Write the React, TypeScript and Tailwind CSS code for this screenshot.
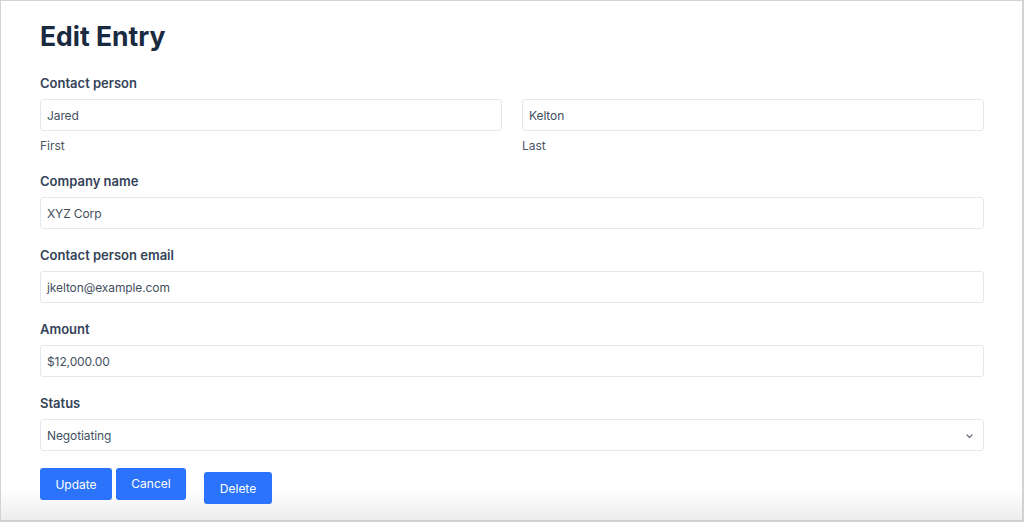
import React from "react";

function Label({ children }: { children: React.ReactNode }) {
  return <div className="text-[13px] leading-[20px] font-semibold text-[#354358]">{children}</div>;
}

function Input({ value }: { value: string }) {
  return (
    <div className="h-[32px] w-full rounded-[3px] border border-[#e3e8ef] bg-white px-[6px] pt-[2px] flex items-center text-[12px] tracking-[-0.1px] text-[#434f60]">
      {value}
    </div>
  );
}

export default function App() {
  return (
    <div
      className="h-[522px] w-[1024px] border-l border-t border-r-2 border-b-2 border-[#d2d2d2] bg-[linear-gradient(to_bottom,#ffffff_calc(100%-30px),#ececec)] overflow-hidden"
      style={{ fontFamily: "Inter, 'Noto Sans', sans-serif" }}
    >
      <div className="pl-[39px] pr-[38px]">
        <h1 className="mt-[19px] text-[26.5px] leading-[33px] font-bold text-[#1a2a40]">Edit Entry</h1>

        <div className="mt-[20px]">
          <Label>Contact person</Label>
          <div className="mt-[6px] grid grid-cols-2 gap-x-[20px]">
            <div>
              <Input value="Jared" />
              <div className="mt-[7px] text-[12px] leading-[16px] text-[#4b5565]">First</div>
            </div>
            <div>
              <Input value="Kelton" />
              <div className="mt-[7px] text-[12px] leading-[16px] text-[#4b5565]">Last</div>
            </div>
          </div>
        </div>

        <div className="mt-[17px]">
          <Label>Company name</Label>
          <div className="mt-[6px]">
            <Input value="XYZ Corp" />
          </div>
        </div>

        <div className="mt-[16px]">
          <Label>Contact person email</Label>
          <div className="mt-[6px]">
            <Input value="jkelton@example.com" />
          </div>
        </div>

        <div className="mt-[16px]">
          <Label>Amount</Label>
          <div className="mt-[6px]">
            <Input value="$12,000.00" />
          </div>
        </div>

        <div className="mt-[16px]">
          <Label>Status</Label>
          <div className="mt-[6px] h-[32px] w-full rounded-[3px] border border-[#e3e8ef] bg-white pl-[6px] pr-[10px] pt-[2px] flex items-center justify-between text-[12px] tracking-[-0.1px] text-[#434f60]">
            <span>Negotiating</span>
            <svg width="7" height="5" viewBox="0 0 7 5" fill="none">
              <path d="M1 1l2.5 2.5L6 1" stroke="#6b7280" strokeWidth="1.3" strokeLinecap="round" strokeLinejoin="round" />
            </svg>
          </div>
        </div>

        <div className="mt-[17px] flex items-start">
          <button className="h-[32px] w-[72px] rounded-[3px] bg-[#2b73fb] pt-[2px] text-[12px] text-white">Update</button>
          <button className="ml-[4px] h-[32px] w-[70px] rounded-[3px] bg-[#2b73fb] text-[12px] text-white">Cancel</button>
          <button className="ml-[18px] mt-[4px] h-[32px] w-[68px] rounded-[3px] bg-[#2b73fb] pt-[2px] text-[12px] text-white">Delete</button>
        </div>
      </div>
    </div>
  );
}
